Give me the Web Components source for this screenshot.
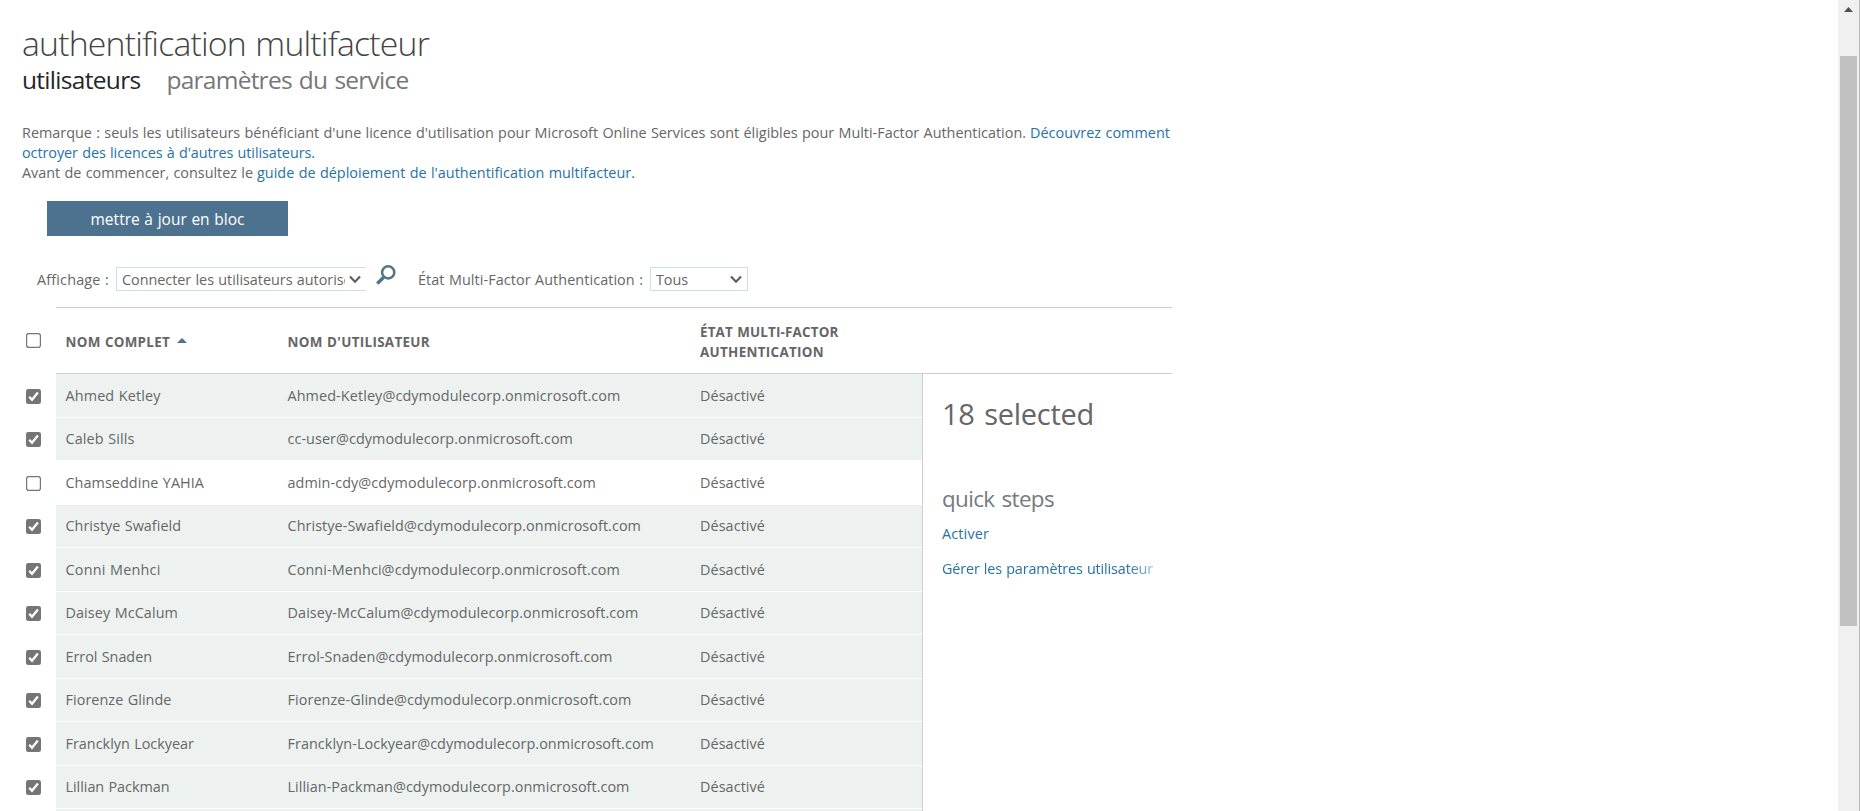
<!DOCTYPE html>
<html lang="fr">
<head>
<meta charset="utf-8">
<title>authentification multifacteur</title>
<style>
html,body{margin:0;height:811px;overflow:hidden;background:#fff}
body{font:14.4px/20px "Open Sans","Noto Sans",sans-serif;color:#666;word-spacing:.04em}
</style>
</head>
<body>
<mfa-app></mfa-app>
<script>
const define = (name, render) => customElements.define(name, class extends HTMLElement {
  connectedCallback() {
    if (this.shadowRoot) return;
    this.attachShadow({mode: 'open'}).innerHTML = render(this);
  }
});
const t = (w, text) => `<fit-text w="${w}">${text}</fit-text>`;

define('mfa-app', () => `
<style>
:host{display:flex;height:811px}
main{flex:1;min-width:0;overflow:hidden}
.top{padding:22px 0 0 22px}
</style>
<main>
  <div class="top"><mfa-heading></mfa-heading><mfa-note></mfa-note></div>
  <bulk-button>${t(154, 'mettre à jour en bloc')}</bulk-button>
  <mfa-filters></mfa-filters>
  <user-table></user-table>
</main>
<page-scrollbar></page-scrollbar>`);

define('mfa-heading', () => `
<style>
:host{display:block;word-spacing:.1em}
h1{margin:0;font-size:33.8px;font-weight:300;line-height:42px;color:#444}
nav{display:flex;gap:26px;font-size:24.5px;line-height:34px;margin-top:-1px;color:#777}
.on{color:#262626}
</style>
<h1>${t(407, 'authentification multifacteur')}</h1>
<nav><span class="on">${t(118.5, 'utilisateurs')}</span><span>${t(242, 'paramètres du service')}</span></nav>`);

define('mfa-note', () => `
<style>
:host{display:block;margin-top:26px}
p{margin:0;display:flex;gap:4px;height:20px}
a{color:#2672a6}
</style>
<p>${t(1004, "Remarque : seuls les utilisateurs bénéficiant d'une licence d'utilisation pour Microsoft Online Services sont éligibles pour Multi-Factor Authentication.")}<a>${t(140, 'Découvrez comment')}</a></p>
<p><a>${t(293, "octroyer des licences à d'autres utilisateurs.")}</a></p>
<p>${t(231, 'Avant de commencer, consultez le')}<a>${t(378, "guide de déploiement de l'authentification multifacteur.")}</a></p>`);

define('bulk-button', () => `
<style>:host{display:flex;justify-content:center;width:241px;height:35px;margin:18px 0 0 47px;background:#4c7290;color:#fff;font-size:15.5px;line-height:36px}</style><slot></slot>`);

define('select-box', el => `
<style>
:host{display:flex;box-sizing:border-box;height:24px;border:1px solid #c5dff3;background:#fff;line-height:23px;align-items:center}
:host([clipped]){border-right:0}
div{flex:1;min-width:0;overflow:hidden;white-space:nowrap;padding-left:5px;height:22px}
svg{margin:0 5px 0 4px;flex:none}
</style>
<div><slot></slot></div>
<svg width="12" height="9" viewBox="0 0 12 9" fill="none" stroke="#5c5c5c" stroke-width="2.1"><path d="M1 1.5 6 6.8 11 1.5"/></svg>`);

define('mfa-filters', () => `
<style>
:host{display:flex;margin:29px 0 0 37px;height:26px;align-items:flex-start}
span{padding-top:5px}
.a{width:250px;margin-left:7px}
.b{width:98px;margin-left:7px}
select-box{margin-top:2px}
.i{margin:0 22px 0 10px}
</style>
<span>${t(72, 'Affichage :')}</span>
<select-box class="a" clipped>${t(236.5, 'Connecter les utilisateurs autorisés')}</select-box>
<svg class="i" width="20" height="20" viewBox="0 0 20 20" fill="none" stroke="#4f7489"><circle cx="12.2" cy="7.4" r="6.1" stroke-width="2.5"/><path d="M7.6 12.2 1.3 18.6" stroke-width="3.4"/></svg>
<span>${t(225, 'État Multi-Factor Authentication :')}</span>
<select-box class="b">${t(32, 'Tous')}</select-box>`);

define('check-box', el => `
<style>
:host{display:block;width:15px;height:15px}
svg{display:block}
</style>
<svg width="15" height="15" viewBox="0 0 15 15">${el.hasAttribute('checked')
 ? '<rect width="15" height="15" rx="2.3" fill="#757575"/><path d="M3.2 7.8 6 10.7 11.9 3.5" fill="none" stroke="#fff" stroke-width="2.3"/>'
 : '<rect x=".6" y=".6" width="13.8" height="13.8" rx="2.2" fill="#fff" stroke="#757575" stroke-width="1.2"/>'}</svg>`);

define('user-row', el => `
<style>
:host{display:grid;grid-template-columns:56px 866px;height:44px}
check-box{margin:15px 0 0 26px}
.r{display:grid;grid-template-columns:222px 412.5px 1fr;padding-left:9.5px;border-bottom:1px solid #fff;line-height:43px;white-space:nowrap;background:#edf2f1}
:host(:nth-child(even)){height:43px}
:host(:nth-child(even)) .r{line-height:41px}
:host(:nth-child(even)) check-box{margin-top:14px}
:host(:not([checked])) .r{background:#fff}
</style>
<check-box ${el.hasAttribute('checked') ? 'checked' : ''}></check-box>
<div class="r"><span>${t(el.dataset.nw, el.dataset.name)}</span><span>${t(el.dataset.mw, el.dataset.mail + '@cdymodulecorp.onmicrosoft.com')}</span><span>${t(65, 'Désactivé')}</span></div>`);

const users = [
 ['Ahmed Ketley', 95, 'Ahmed-Ketley', 333],
 ['Caleb Sills', 69, 'cc-user', 285.5],
 ['Chamseddine YAHIA', 138.5, 'admin-cdy', 308.5],
 ['Christye Swafield', 115.5, 'Christye-Swafield', 353.5],
 ['Conni Menhci', 95, 'Conni-Menhci', 332.5],
 ['Daisey McCalum', 112.5, 'Daisey-McCalum', 351],
 ['Errol Snaden', 86.5, 'Errol-Snaden', 325],
 ['Fiorenze Glinde', 106, 'Fiorenze-Glinde', 344],
 ['Francklyn Lockyear', 128.5, 'Francklyn-Lockyear', 366.5],
 ['Lillian Packman', 104, 'Lillian-Packman', 342]
];

define('user-table', () => `
<style>
:host{display:block;margin-top:16px}
header{display:grid;grid-template-columns:56px 1116px;height:67px}
header check-box{margin:26px 0 0 26px}
.h{display:grid;grid-template-columns:222px 412.5px 1fr;align-items:center;padding-left:9.5px;border:solid #c8d0d2;border-width:1px 0;font-weight:700;font-size:13.4px;color:#666;padding-top:3px}
.n{display:flex;gap:7px;align-items:center}
.n svg{margin-bottom:3px}
.e{display:grid}
.b{display:flex;height:437px;overflow:hidden}
.more{height:2px;margin-left:56px;background:#edf2f1}
</style>
<header><check-box></check-box>
<div class="h"><span class="n">${t(104.5, 'NOM COMPLET')}<svg width="10" height="5" viewBox="0 0 10 5"><path d="M5 0 10 5H0z" fill="#4f7489"/></svg></span>
<span>${t(142.5, "NOM D'UTILISATEUR")}</span>
<span class="e"><span>${t(138.5, 'ÉTAT MULTI-FACTOR')}</span><span>${t(124, 'AUTHENTICATION')}</span></span></div></header>
<div class="b"><div>${users.map((u, i) => `<user-row ${i === 2 ? '' : 'checked'} data-name="${u[0]}" data-nw="${u[1]}" data-mail="${u[2]}" data-mw="${u[3]}"></user-row>`).join('')}<div class="more"></div></div>
<quick-panel></quick-panel></div>`);

define('quick-panel', () => `
<style>
:host{display:block;width:249px;box-sizing:border-box;border-left:1px solid #c8d0d2;padding:21px 0 0 19px}
h2,h3{margin:0;font-weight:400;word-spacing:.08em}
h2{font-size:29px;line-height:38px;color:#666}
h3{font-size:22.4px;line-height:30px;margin-top:51px;color:#757b80}
a{display:block;width:211px;color:#2672a6;height:20px;margin-top:10px}
a+a{margin-top:15px}
.f{-webkit-mask-image:linear-gradient(90deg,#000 185px,rgba(0,0,0,.45) 211px)}
</style>
<h2>${t(152, '18 selected')}</h2>
<h3>${t(112, 'quick steps')}</h3>
<a>${t(47, 'Activer')}</a><a class="f">${t(211, 'Gérer les paramètres utilisateur')}</a>`);

define('page-scrollbar', () => `
<style>
:host{display:flex;flex-direction:column;align-items:center;box-sizing:border-box;width:22px;background:#f0f0f0;border-right:1px solid #b9b9b9}
svg{margin-top:7px}
div{width:17px;height:570px;margin-top:44px;background:#c1c1c1}
</style>
<svg width="9" height="5" viewBox="0 0 9 5"><path d="M4.5 0 9 5H0z" fill="#505050"/></svg><div></div>`);

/* A one-line label whose tracking adapts to the width given in its w attribute. */
customElements.define('fit-text', class extends HTMLElement {
  connectedCallback() {
    if (this.shadowRoot) return;
    this.attachShadow({mode: 'open'}).innerHTML =
      '<style>:host{display:inline-block;white-space:nowrap;vertical-align:top}</style><slot></slot>';
    const w = +this.getAttribute('w'), n = this.textContent.length;
    this.style.fontVariantLigatures = 'none';
    const natural = this.getBoundingClientRect().width;
    this.style.letterSpacing = ((w - natural) / n).toFixed(4) + 'px';
  }
});
</script>
</body>
</html>
